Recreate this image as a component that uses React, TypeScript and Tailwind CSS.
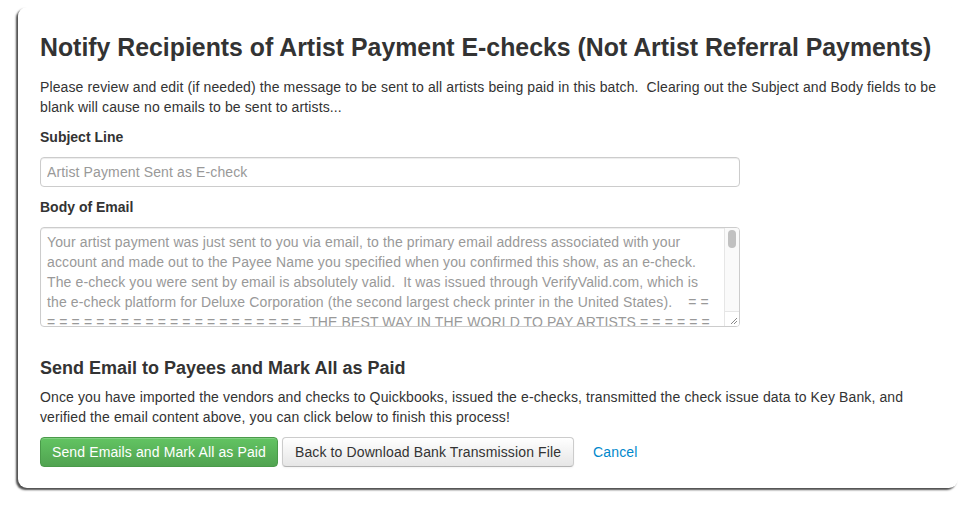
const bodyText =
  'Your artist payment was just sent to you via email, to the primary email address associated with your account and made out to the Payee Name you specified when you confirmed this show, as an e-check.  The e-check you were sent by email is absolutely valid.  It was issued through VerifyValid.com, which is the e-check platform for Deluxe Corporation (the second largest check printer in the United States).    = = = = = = = = = = = = = = = = = = = = = = =  THE BEST WAY IN THE WORLD TO PAY ARTISTS = = = = = = = = = = = = = = = = = = = = = = =  Questions? Contact us any time and we will be happy to help.'

function App() {
  return (
    <div className="w-[980px] h-[509px] bg-white font-['Liberation_Sans',Arial,sans-serif] text-[#333] text-[14px] leading-[20px] tracking-[0.12px] pt-[7px] pl-[18px]">
      <div className="w-[940px] h-[481px] bg-white rounded-[9px] shadow-[-2px_2px_2px_rgba(0,0,0,0.7)] pt-[26px] pl-[22px] pr-[16px]">
        <h1 className="text-[24.85px] leading-[30px] font-bold tracking-normal">
          Notify Recipients of Artist Payment E-checks (Not Artist Referral Payments)
        </h1>
        <p className="mt-[14px]">
          Please review and edit (if needed) the message to be sent to all artists being paid in this batch.&nbsp; Clearing out the Subject and Body fields to be blank will cause no emails to be sent to artists...
        </p>

        <label className="block mt-[10px] font-bold tracking-normal">Subject Line</label>
        <input
          type="text"
          placeholder="Artist Payment Sent as E-check"
          className="block mt-[10px] w-[700px] h-[30px] px-[6px] border border-[#ccc] rounded-[4px] shadow-[inset_0_1px_1px_rgba(0,0,0,0.075)] text-[14px] tracking-[0.12px] placeholder:text-[#999] outline-none"
        />

        <label className="block mt-[10px] font-bold tracking-normal">Body of Email</label>
        <div className="mt-[10px] w-[700px] h-[100px] flex border border-[#ccc] rounded-[4px] overflow-hidden shadow-[inset_0_1px_1px_rgba(0,0,0,0.075)]">
          <textarea
            readOnly
            defaultValue={bodyText}
            className="flex-1 min-w-0 h-full pl-[6px] pr-[4px] py-[4px] bg-transparent resize-none overflow-hidden text-[14px] leading-[20px] tracking-[0.12px] text-[#999] outline-none"
          />
          <div className="w-[15px] flex flex-col border-l border-[#e6e6e6] bg-[#fafafa]">
            <div className="flex-1 pt-[2px] flex justify-center">
              <div className="w-[8px] h-[18px] rounded-full bg-[#c1c1c1]" />
            </div>
            <div className="h-[15px] border-t border-[#e6e6e6] bg-white flex items-end justify-end">
              <svg width="9" height="9" viewBox="0 0 9 9" className="mr-[1px] mb-[1px]">
                <path d="M8 2 L2 8 M8 5 L5 8" stroke="#888" strokeWidth="1" fill="none" />
              </svg>
            </div>
          </div>
        </div>

        <h4 className="mt-[29px] text-[18px] leading-[24px] font-bold tracking-normal">
          Send Email to Payees and Mark All as Paid
        </h4>
        <p className="mt-[7px]">
          Once you have imported the vendors and checks to Quickbooks, issued the e-checks, transmitted the check issue data to Key Bank, and verified the email content above, you can click below to finish this process!
        </p>

        <div className="mt-[10px] flex items-center">
          <button className="h-[30px] px-[11px] rounded-[4px] text-white tracking-[0.12px] border border-[#4a9a4a] bg-gradient-to-b from-[#62c462] to-[#51a351] shadow-[inset_0_1px_0_rgba(255,255,255,0.2)]">
            Send Emails and Mark All as Paid
          </button>
          <button className="ml-[4px] h-[30px] px-[12px] rounded-[4px] text-[#333] tracking-[0.12px] border border-[#ccc] border-b-[#b3b3b3] bg-gradient-to-b from-white to-[#e6e6e6] shadow-[inset_0_1px_0_rgba(255,255,255,0.2),0_1px_2px_rgba(0,0,0,0.05)]">
            Back to Download Bank Transmission File
          </button>
          <a href="#" className="ml-[19px] text-[#0088cc]">
            Cancel
          </a>
        </div>
      </div>
    </div>
  )
}

export default App
